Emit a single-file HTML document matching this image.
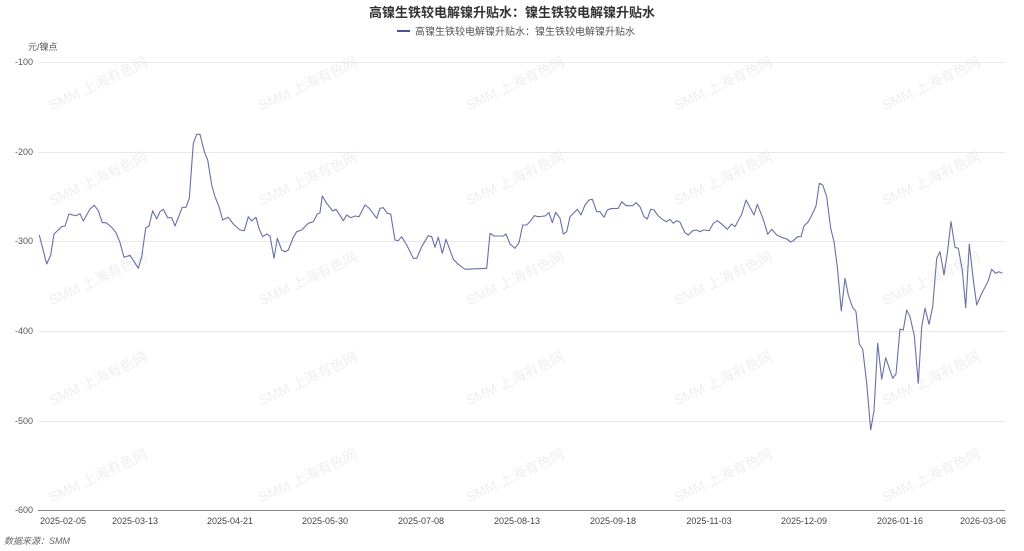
<!DOCTYPE html>
<html><head><meta charset="utf-8"><style>
body{margin:0;background:#fff;width:1024px;height:551px;overflow:hidden;font-family:"Liberation Sans","Noto Sans CJK SC",sans-serif;}
</style></head><body>
<svg width="1024" height="551" xmlns="http://www.w3.org/2000/svg" style="position:absolute;left:0;top:0;font-family:'Liberation Sans','Noto Sans CJK SC',sans-serif">
<g fill="#efefef" font-size="14">
<g id="r">
<text transform="translate(100,88) rotate(-25)" text-anchor="middle">SMM 上海有色网</text>
<text transform="translate(310,88) rotate(-25)" text-anchor="middle">SMM 上海有色网</text>
<text transform="translate(517,88) rotate(-25)" text-anchor="middle">SMM 上海有色网</text>
<text transform="translate(725,88) rotate(-25)" text-anchor="middle">SMM 上海有色网</text>
<text transform="translate(933,88) rotate(-25)" text-anchor="middle">SMM 上海有色网</text>
</g>
<use href="#r" y="95"/><use href="#r" y="195"/><use href="#r" y="295"/><use href="#r" y="392"/>
</g>
<text x="512" y="17" text-anchor="middle" font-size="13" font-weight="bold" fill="#333">高镍生铁较电解镍升贴水：镍生铁较电解镍升贴水</text>
<line x1="397" y1="31" x2="410" y2="31" stroke="#4a5190" stroke-width="2"/>
<text x="415" y="35" font-size="10" fill="#555">高镍生铁较电解镍升贴水：镍生铁较电解镍升贴水</text>
<text x="28" y="50" font-size="9" fill="#555">元/镍点</text>
<g stroke="#e8e8e8" stroke-width="1">
<line x1="38" y1="62.5" x2="1005" y2="62.5"/><line x1="38" y1="152.5" x2="1005" y2="152.5"/><line x1="38" y1="241.5" x2="1005" y2="241.5"/><line x1="38" y1="331.5" x2="1005" y2="331.5"/><line x1="38" y1="421.5" x2="1005" y2="421.5"/>
</g>
<line x1="38" y1="510.5" x2="1005" y2="510.5" stroke="#888" stroke-width="1"/>
<g font-size="9" fill="#555" text-anchor="end">
<text x="33" y="65">-100</text><text x="33" y="155">-200</text><text x="33" y="244">-300</text><text x="33" y="334">-400</text><text x="33" y="424">-500</text><text x="33" y="513">-600</text>
</g>
<g font-size="9" fill="#444" text-anchor="middle">
<text x="63" y="524">2025-02-05</text><text x="135" y="524">2025-03-13</text><text x="230" y="524">2025-04-21</text><text x="325" y="524">2025-05-30</text><text x="421" y="524">2025-07-08</text><text x="517" y="524">2025-08-13</text><text x="613" y="524">2025-09-18</text><text x="709" y="524">2025-11-03</text><text x="804" y="524">2025-12-09</text><text x="900" y="524">2026-01-16</text><text x="983" y="524">2026-03-06</text>
</g>
<text x="4" y="544" font-size="9" font-style="italic" fill="#666">数据来源：SMM</text>
<polyline fill="none" stroke="#6770a8" stroke-width="1.1" stroke-linejoin="round" points="39.3,235 46.7,264 50.7,255 54,234 61.7,226.7 65,226 69,214 75.7,215.7 80,213.7 83.3,221 90,209 94.3,205.3 98.3,210.7 102.3,222.7 106,222.7 111.7,227.3 116,232.7 120,242.7 124,257.3 130,255.3 138.3,268.3 141.7,256.7 145.7,228 149,226 152.7,210.7 156.7,219 160,211.7 163.3,209.3 167.7,217.7 171.7,217.7 175,226 182.3,207.3 186,207.3 189.3,198.3 193.3,143.3 196.7,134.3 200,134.3 204.3,151.7 207.7,160 211.7,185 215,196.7 219,206.7 222.7,220 228.3,217.3 233.3,224 240,230 244.3,230.7 248.3,216.7 251.7,221 256,217.3 259.3,229.3 262.7,236.7 266.7,234 270,236 274,258.3 277.3,238.3 281.7,250 285,251.7 288.3,250 293.3,237.3 296.7,231.7 301.7,230 308.3,223.3 313.3,221.7 317.3,214 320,212.7 322.3,196 326.7,203.3 332.7,211 336,209.3 343.3,220.7 346.7,215 350.7,217.7 355,216 359,216.7 365,205 369.3,208.3 376.7,218.3 380,208.3 383.3,207.7 387.3,213.3 390.7,214 395,240 398.3,240.7 401.7,236.7 406.7,245 413.3,258.3 416.7,258.3 421.7,246.7 428.3,235.7 431.7,236.7 435,247.3 438.3,237.3 442.3,253.3 446,239.3 453.3,259.3 458.3,264.3 465,269.3 486.7,268.3 490,233.3 494,236 503.3,236 506,234 510,244 515,248.3 519,242.7 522.7,225 526.7,225 530,221.7 534.3,215.7 538.3,216.7 545,216 549,212.7 552.3,222.7 555.7,212.3 560,218.3 563.3,234 566.7,231.7 570,216.7 577.3,209.3 581,215 585,205 589,200 592.3,199.3 596.7,211.7 600,211.7 604,217.3 607.3,210 610.7,208.7 618.3,208.3 621.7,201.7 626,205.7 632.7,205.7 636,202.7 640,206.7 644,216.7 647.3,219 650.7,209.3 654,210 658.3,216 663.3,220 666.7,221.7 670,219.3 673.3,223.3 676.7,220.7 680,222.3 685,232.7 688.3,235 692.7,230.7 696.7,230 700,231.7 703.3,230 709.3,230.7 713.3,223.3 717.3,220.7 721.7,224 727.3,229.3 731.7,224 735,226.7 741.7,214.3 746,200 754,215 757.3,204.3 763.3,219.3 767.7,234.3 771.7,229.3 776.7,235 781.7,237.3 786.7,239 790.7,242 793.3,240.7 797.7,236.7 801,236.7 804,226 808.3,221.7 812.7,213.3 816,206 819.3,183.3 822.7,185 826.7,196.7 830.7,228.3 834,241.7 837.3,266.7 841.3,311 845,278.3 848.3,295 852.3,306.7 856,311.7 859.3,344 862.7,349 866.7,383.3 870.7,430 874,410.7 877.7,343.3 881.7,379.3 885.7,357.7 892.7,378.3 896,374 900,329 903.3,330 906.7,310 910,316.7 914.3,335.7 918.3,383.3 921.7,326.7 925,308.3 929,324.3 932.7,306.7 936.7,258.3 940,251.7 944,275 947.3,253.3 951,221.7 955,247.3 958.3,248.3 962.3,270 965.7,307.7 969.3,244 973.3,280 976.7,305 981,295 988.3,280.7 991.7,269.3 995.7,273.3 999,271.7 1002.3,273.3"/>
</svg>
</body></html>
